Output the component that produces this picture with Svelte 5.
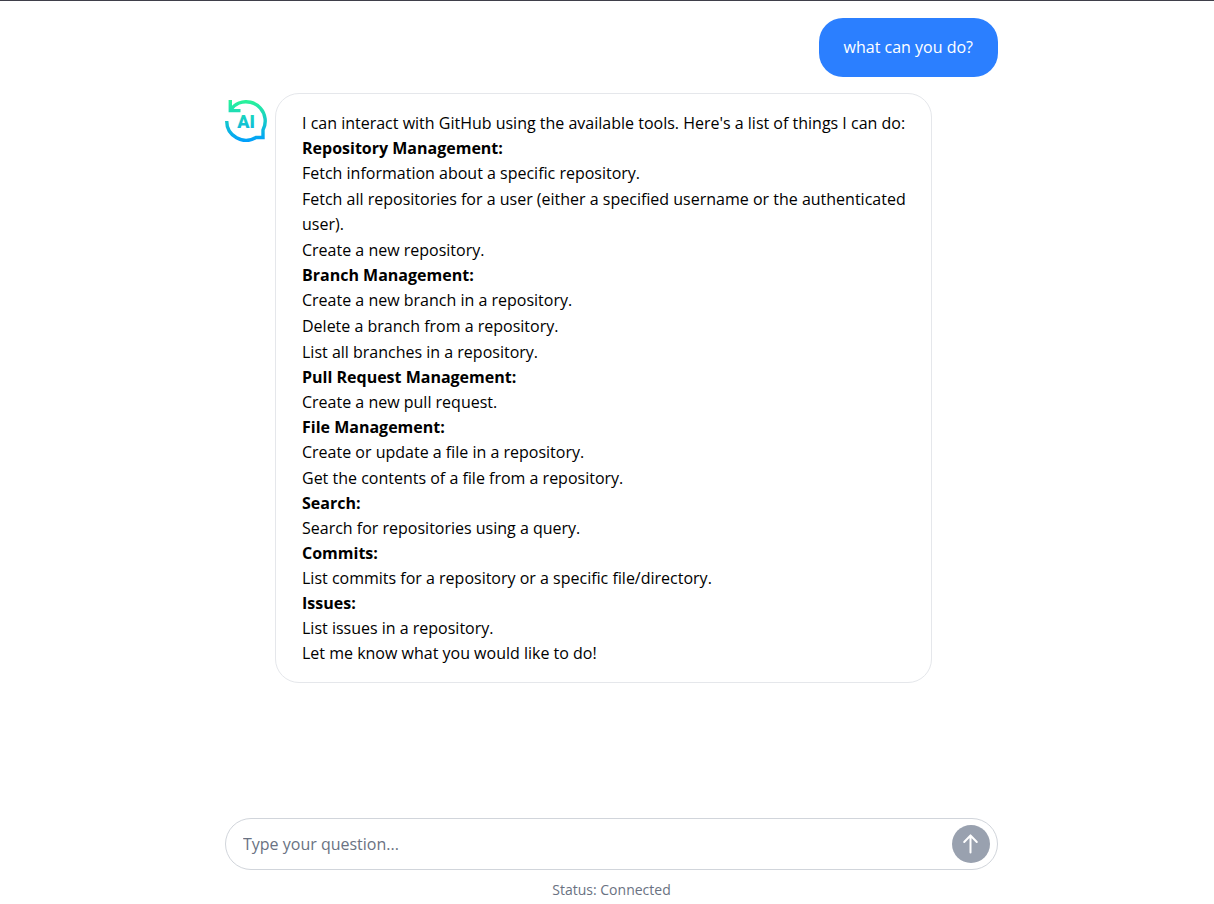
<script>
  const sections = [
    { title: 'Repository Management:', items: ['Fetch information about a specific repository.', 'Fetch all repositories for a user (either a specified username or the authenticated user).', 'Create a new repository.'] },
    { title: 'Branch Management:', items: ['Create a new branch in a repository.', 'Delete a branch from a repository.', 'List all branches in a repository.'] },
    { title: 'Pull Request Management:', items: ['Create a new pull request.'] },
    { title: 'File Management:', items: ['Create or update a file in a repository.', 'Get the contents of a file from a repository.'] },
    { title: 'Search:', items: ['Search for repositories using a query.'] },
    { title: 'Commits:', items: ['List commits for a repository or a specific file/directory.'] },
    { title: 'Issues:', items: ['List issues in a repository.'] }
  ];
  let question = $state('');
</script>

<div class="page">
  <main class="chat">
    <div class="user">what can you do?</div>
    <div class="reply">
      <svg class="avatar" viewBox="0 0 42 42">
        <defs>
          <linearGradient id="mark" x1="0" y1="0" x2="0" y2="42" gradientUnits="userSpaceOnUse">
            <stop offset="0" stop-color="#2af598" />
            <stop offset="1" stop-color="#009efd" />
          </linearGradient>
        </defs>
        <g fill="none" stroke="url(#mark)" stroke-width="3.4">
          <path d="M1.7 21A19.3 19.3 0 0 0 31 37.5H38V30A19.3 19.3 0 0 0 14 3Q9 5 5.5 10" />
          <path d="M5.3 0V10.6H15.5" />
        </g>
        <text class="logo-text" x="21" y="28" text-anchor="middle" fill="url(#mark)">AI</text>
      </svg>
      <div class="bubble">
        <p>I can interact with GitHub using the available tools. Here's a list of things I can do:</p>
        {#each sections as s}
          <p><strong>{s.title}</strong></p>
          <ul>{#each s.items as item}<li>{item}</li>{/each}</ul>
        {/each}
        <p>Let me know what you would like to do!</p>
      </div>
    </div>
  </main>
  <footer>
    <form onsubmit={(e) => e.preventDefault()}>
      <input type="text" aria-label="Question" placeholder="Type your question..." bind:value={question} />
      <button aria-label="Send">
        <svg viewBox="0 0 24 24" width="24" height="24"><path d="M11.5 20.5V3.5M5.2 10L11.5 3.5L17.8 10" fill="none" stroke="#fff" stroke-width="2" stroke-linecap="round" stroke-linejoin="round" /></svg>
      </button>
    </form>
    <div class="status">Status: Connected</div>
  </footer>
</div>

<style>
  :global(body) { margin: 0; background: #fff; }
  .page { box-sizing: border-box; min-height: 100vh; display: flex; flex-direction: column; padding: 17px 16px 2px 25px; border-top: 1px solid #3f3f4a; font-family: "Segoe UI", "Open Sans", "Noto Sans", sans-serif; font-size: 16px; line-height: 25px; color: #000; }
  .chat, footer { box-sizing: border-box; width: 100%; max-width: 773px; margin: 0 auto; }
  .chat { flex: 1; display: flex; flex-direction: column; gap: 16px; }
  .user { align-self: flex-end; padding: 17px 25px; border-radius: 24px; background: #2b7fff; color: #fff; }
  .reply { display: flex; align-items: flex-start; gap: 8px; max-width: 707px; }
  .avatar { width: 42px; height: 42px; flex: none; margin-top: 7px; }
  .logo-text { font-family: Roboto, sans-serif; font-size: 18px; font-weight: 900; }
  .bubble { flex: 1; min-width: 0; padding: 17px 20px 16px 26px; border: 1px solid #e5e7eb; border-radius: 24px; }
  p, ul { margin: 0; padding: 0; }
  ul { display: grid; gap: 1px; list-style: none; }
  form { display: flex; align-items: center; box-sizing: border-box; height: 52px; padding: 0 7px 0 17px; border: 1px solid #d1d5db; border-radius: 26px; }
  input { flex: 1; min-width: 0; padding: 0; border: 0; outline: 0; background: none; font: inherit; color: #000; }
  input::placeholder { color: #6a7282; opacity: 1; }
  button { display: grid; place-items: center; width: 38px; height: 38px; padding: 0; border: 0; border-radius: 50%; background: #99a1af; }
  .status { padding-top: 8px; text-align: center; font-size: 14px; line-height: 24px; color: #6a7282; }
</style>
